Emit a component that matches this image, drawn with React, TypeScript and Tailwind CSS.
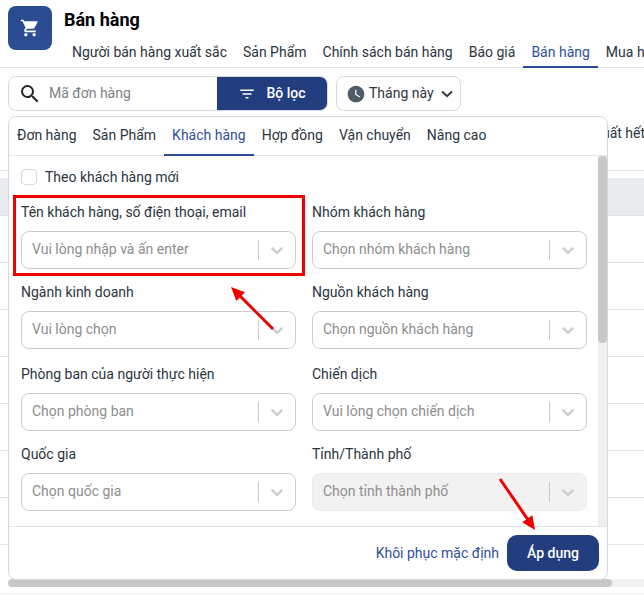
import { MdShoppingCart, MdSearch, MdFilterList, MdWatchLater } from 'react-icons/md';

const mainTabs = ['Người bán hàng xuất sắc', 'Sản Phẩm', 'Chính sách bán hàng', 'Báo giá', 'Bán hàng', 'Mua hàng'];
const filterTabs = ['Đơn hàng', 'Sản Phẩm', 'Khách hàng', 'Hợp đồng', 'Vận chuyển', 'Nâng cao'];

const fields = [
  { label: 'Tên khách hàng, số điện thoại, email', placeholder: 'Vui lòng nhập và ấn enter' },
  { label: 'Nhóm khách hàng', placeholder: 'Chọn nhóm khách hàng' },
  { label: 'Ngành kinh doanh', placeholder: 'Vui lòng chọn' },
  { label: 'Nguồn khách hàng', placeholder: 'Chọn nguồn khách hàng' },
  { label: 'Phòng ban của người thực hiện', placeholder: 'Chọn phòng ban', low: true },
  { label: 'Chiến dịch', placeholder: 'Vui lòng chọn chiến dịch', low: true },
  { label: 'Quốc gia', placeholder: 'Chọn quốc gia' },
  { label: 'Tỉnh/Thành phố', placeholder: 'Chọn tỉnh thành phố', disabled: true },
];

const SelectChevron = () => (
  <svg viewBox="0 0 20 20" className="w-5 h-5 fill-[#cccccc]">
    <path d="M4.516 7.548c0.436-0.446 1.043-0.481 1.576 0l3.908 3.747 3.908-3.747c0.533-0.481 1.141-0.446 1.574 0 0.436 0.445 0.408 1.197 0 1.615-0.406 0.418-4.695 4.502-4.695 4.502-0.217 0.223-0.502 0.335-0.787 0.335s-0.57-0.112-0.789-0.335c0 0-4.287-4.084-4.695-4.502s-0.436-1.17 0-1.615z" />
  </svg>
);

const Field = ({ label, placeholder, disabled, low }: { label: string; placeholder: string; disabled?: boolean; low?: boolean }) => (
  <div className={`flex flex-col ${low ? 'mt-[2px]' : ''}`}>
    <div className="h-[20px] leading-[20px] text-[14px] text-[#2b3440] whitespace-nowrap">{label}</div>
    <div
      className={`mt-[9px] h-[38px] rounded-lg border flex items-center ${
        disabled ? 'bg-[#f2f2f2] border-[#ececec]' : 'bg-white border-[#cccccc]'
      }`}
    >
      <span className="flex-1 pl-[10px] pb-[2px] text-[14px] text-[#8e8e8e] whitespace-nowrap">{placeholder}</span>
      <span className="w-px h-[20px] bg-[#cccccc]" />
      <span className="w-[36px] flex justify-center">
        <SelectChevron />
      </span>
    </div>
  </div>
);

const Arrow = ({ x1, y1, x2, y2, className }: { x1: number; y1: number; x2: number; y2: number; className: string }) => {
  // 주석용 빨간 화살표
  const angle = Math.atan2(y2 - y1, x2 - x1);
  const head = 15;
  const spread = 0.42;
  const p1 = `${x2 - head * Math.cos(angle - spread)},${y2 - head * Math.sin(angle - spread)}`;
  const p2 = `${x2 - head * Math.cos(angle + spread)},${y2 - head * Math.sin(angle + spread)}`;
  return (
    <svg className={className} width="644" height="597" viewBox="0 0 644 597">
      <line x1={x1} y1={y1} x2={x2 - 8 * Math.cos(angle)} y2={y2 - 8 * Math.sin(angle)} stroke="#f00000" strokeWidth="3" />
      <polygon points={`${x2},${y2} ${p1} ${p2}`} fill="#f00000" />
    </svg>
  );
};

export default function App() {
  return (
    <div className="relative w-[644px] h-[597px] overflow-hidden bg-white font-['Roboto',sans-serif] text-[14px] text-[#2b3440]">
      {/* header */}
      <div className="h-[68px] border-b border-[#e3e5ea] flex pl-2 pt-[6px]">
        <div className="w-[44px] h-[44px] shrink-0 rounded-lg bg-gradient-to-b from-[#2a4b8f] to-[#2c4d93] flex items-center justify-center">
          <MdShoppingCart className="text-white w-[20px] h-[20px]" />
        </div>
        <div className="ml-3 flex flex-col min-w-0">
          <div className="h-[28px] leading-[28px] text-[18px] font-bold text-black">Bán hàng</div>
          <div className="flex mt-[6px] whitespace-nowrap">
            {mainTabs.map((t) => (
              <div
                key={t}
                className={`h-[28px] px-2 pt-[2px] leading-[20px] border-b-2 ${
                  t === 'Bán hàng' ? 'text-[#2f4f9a] border-[#2b4c94]' : 'border-transparent'
                }`}
              >
                {t}
              </div>
            ))}
          </div>
        </div>
      </div>

      {/* toolbar */}
      <div className="flex pl-2 mt-2 h-[35px]">
        <div className="w-[320px] rounded-lg border border-[#d6d8e0] flex overflow-hidden">
          <div className="flex-1 flex items-center pl-[9px]">
            <MdSearch className="w-[24px] h-[24px] text-[#22262b]" />
            <span className="ml-[7px] pb-[1px] text-[#7d7f86]">Mã đơn hàng</span>
          </div>
          <div className="w-[110px] bg-[#233e7f] text-white font-medium flex items-center justify-center gap-[10px]">
            <MdFilterList className="w-[18px] h-[18px]" />
            <span className="pb-[1px]">Bộ lọc</span>
          </div>
        </div>
        <div className="ml-[8px] w-[125px] rounded-lg border border-[#d6d8e0] flex items-center pl-[9px]">
          <MdWatchLater className="w-[20px] h-[20px] text-[#4f5b67]" />
          <span className="ml-[3px] pb-[1px]">Tháng này</span>
          <svg viewBox="0 0 12 8" className="ml-[7px] w-[12px] h-[8px] fill-none stroke-[#2f3742] stroke-2">
            <path d="M1 1.5 L6 6.2 L11 1.5" />
          </svg>
        </div>
      </div>

      {/* table behind the popup */}
      <div className="pl-[595px] mt-[11px] h-[22px] leading-[22px] whitespace-nowrap overflow-hidden">xuất hết hàng</div>
      <div className="mt-[26px] border-t border-[#e3e5ea]" />
      <div className="mt-[7px] h-[38px] bg-[#e9ecef] border-b border-[#dfe1e6]" />
      {[0, 1, 2, 3, 4, 5, 6].map((i) => (
        <div key={i} className="h-[47px] border-b border-[#e3e5ea]" />
      ))}

      {/* page scrollbar */}
      <div className="mt-[34px] ml-2 h-2 bg-[#f0f0f0] rounded-l">
        <div className="w-[604px] h-2 bg-[#c8c8c8] rounded" />
      </div>
      <div className="mt-[6px] border-t border-[#eeeeee]" />

      {/* filter popup */}
      <div className="absolute left-2 top-[116px] w-[600px] h-[464px] bg-white rounded-lg border border-[#d6d8e0] flex flex-col overflow-hidden">
        <div className="h-[39px] shrink-0 border-b border-[#e3e5ea] flex whitespace-nowrap">
          {filterTabs.map((t) => (
            <div
              key={t}
              className={`h-[39px] px-2 pt-[8px] leading-[20px] border-b-2 ${
                t === 'Khách hàng' ? 'text-[#2f4f9a] border-[#2b4c94]' : 'border-transparent'
              }`}
            >
              {t}
            </div>
          ))}
        </div>

        <div className="flex-1 min-h-0 flex">
          <div className="flex-1 pl-3 pr-[10px] pt-[13px]">
            <div className="flex items-center h-[16px]">
              <span className="w-[16px] h-[16px] rounded border border-[#d6d8e0]" />
              <span className="ml-2">Theo khách hàng mới</span>
            </div>
            <div className="mt-[17px] w-[566px] grid grid-cols-2 gap-x-4 gap-y-[13px]">
              {fields.map((f) => (
                <Field key={f.label} label={f.label} placeholder={f.placeholder} disabled={f.disabled} low={f.low} />
              ))}
            </div>
          </div>
          <div className="w-[9px] bg-[#f0f0f0]">
            <div className="h-[187px] bg-[#c8c8c8] rounded" />
          </div>
        </div>

        <div className="h-[53px] shrink-0 border-t border-[#e3e5ea] flex items-center justify-end pr-2">
          <span className="text-[#2f4f9a]">Khôi phục mặc định</span>
          <button className="ml-2 w-[92px] h-[36px] rounded-[10px] bg-[#233e7f] text-white font-medium">Áp dụng</button>
        </div>
      </div>

      {/* red annotations */}
      <div className="absolute left-[13px] top-[195px] w-[292px] h-[81px] border-[3px] border-[#f00000]" />
      <Arrow x1={273} y1={329} x2={231} y2={287} className="absolute left-0 top-0 pointer-events-none" />
      <Arrow x1={500} y1={479} x2={535} y2={530} className="absolute left-0 top-0 pointer-events-none" />
    </div>
  );
}
